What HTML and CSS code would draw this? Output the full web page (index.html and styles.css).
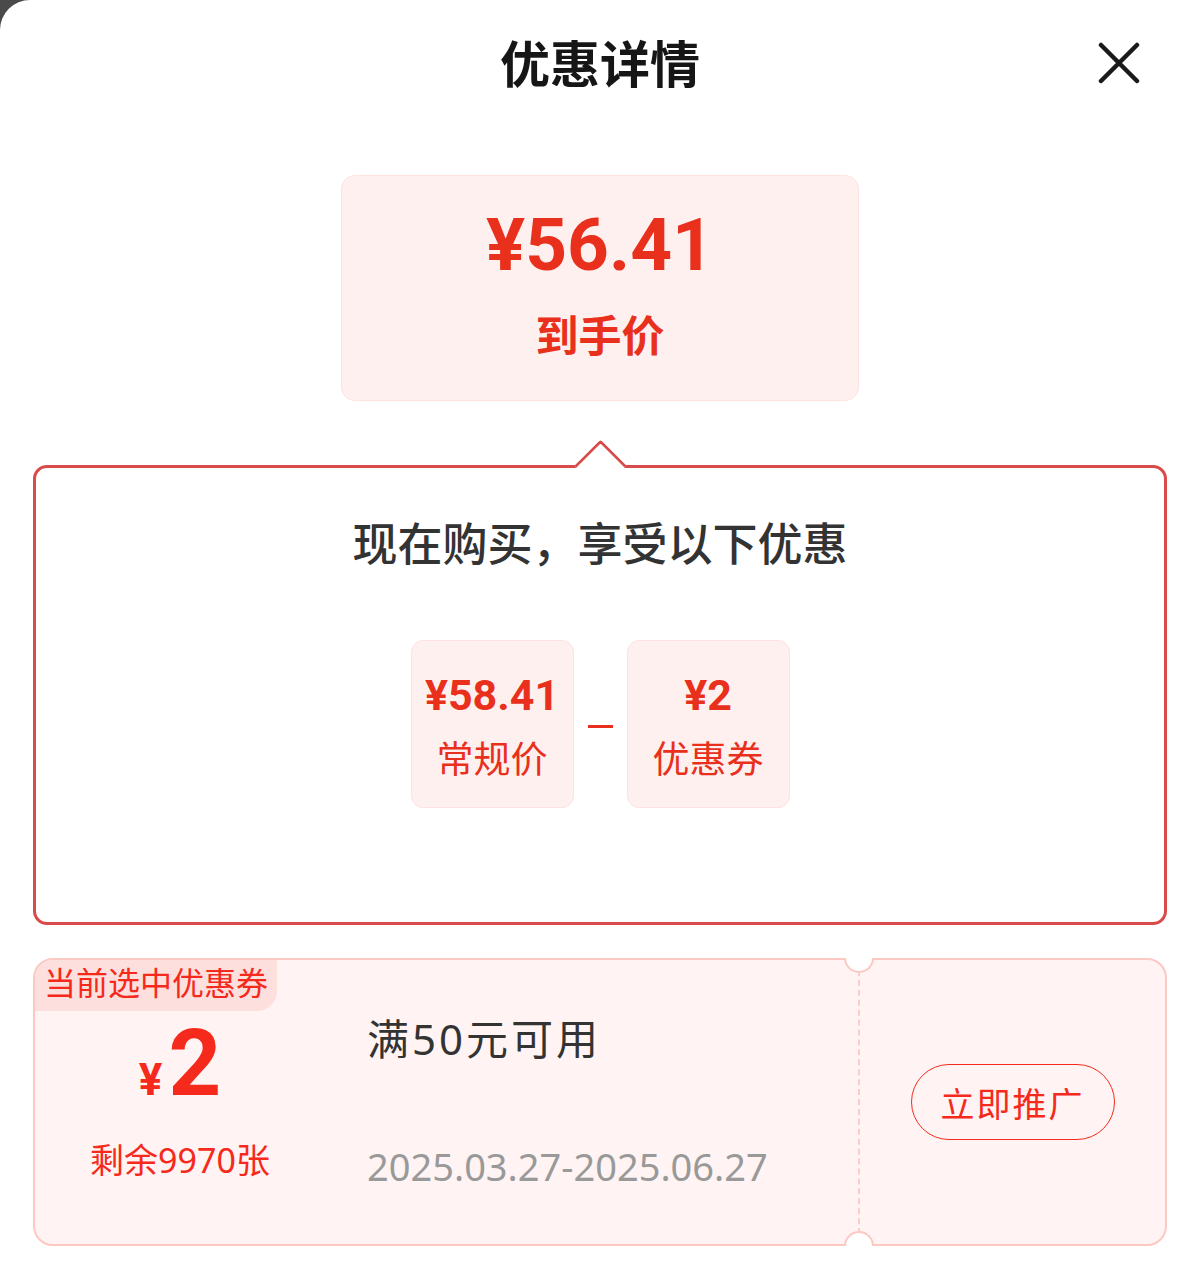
FILE: index.html
```html
<!DOCTYPE html>
<html lang="zh-CN">
<head>
  <meta charset="UTF-8">
  <title>优惠详情</title>
  <link rel="stylesheet" href="styles.css">
</head>
<body>

<div class="sheet">
  <div class="header">
    <h1>优惠详情</h1>
    <button class="close-btn" aria-label="关闭">
      <svg width="42" height="42" viewBox="0 0 42 42">
        <path d="M3 3 L39 39 M39 3 L3 39" stroke="#1a1a1a" stroke-width="4.5" stroke-linecap="round" fill="none"/>
      </svg>
    </button>
  </div>

  <div class="final-price">
    <div class="final-amount">¥56.41</div>
    <div class="final-label">到手价</div>
  </div>

  <div class="bubble">
    <div class="bubble-title">现在购买，享受以下优惠</div>
    <div class="calc">
      <div class="calc-item">
        <div class="calc-amount">¥58.41</div>
        <div class="calc-label">常规价</div>
      </div>
      <div class="minus"></div>
      <div class="calc-item">
        <div class="calc-amount">¥2</div>
        <div class="calc-label">优惠券</div>
      </div>
    </div>
  </div>

  <div class="coupon">
    <div class="coupon-tag">当前选中优惠券</div>
    <div class="coupon-value">
      <div class="coupon-amount"><span class="yen">¥</span>2</div>
      <div class="coupon-left">剩余9970张</div>
    </div>
    <div class="coupon-info">
      <div class="coupon-rule">满50元可用</div>
      <div class="coupon-date">2025.03.27-2025.06.27</div>
    </div>
    <div class="coupon-action">
      <button class="promote-btn">立即推广</button>
    </div>
  </div>
</div>

</body>
</html>
```

FILE: styles.css
```css
body {
  margin: 0;
  background: #4a4a4a;
  overflow: hidden;
  font-family: "Noto Sans", "Noto Sans CJK SC", sans-serif;
}

.sheet {
  width: 1200px;
  min-height: 1274px;
  background: #fff;
  border-radius: 30px 0 0 0;
}

.header {
  position: relative;
  height: 128px;
  display: flex;
  align-items: center;
  justify-content: center;
}

.header h1 {
  margin: 0;
  font-size: 50px;
  font-weight: 700;
  color: #161616;
  line-height: 60px;
}

.close-btn {
  position: absolute;
  right: 60px;
  top: 42px;
  width: 42px;
  height: 42px;
  padding: 0;
  border: none;
  background: none;
}

.close-btn svg {
  display: block;
}

/* 到手价 */
.final-price {
  width: 516px;
  margin: 47px auto 0;
  padding: 32px 0 39px;
  background: #fff0f0;
  border: 1px solid #fde2e0;
  border-radius: 14px;
  text-align: center;
  color: #e8301c;
}

.final-amount {
  font-family: Roboto, "Noto Sans CJK SC", sans-serif;
  font-size: 73px;
  font-weight: 700;
  line-height: 74px;
}

.final-label {
  margin-top: 29px;
  font-size: 43px;
  font-weight: 700;
  line-height: 50px;
}

/* 优惠说明 */
.bubble {
  position: relative;
  margin: 64px 33px 0;
  height: 454px;
  box-sizing: content-box;
  border: 3px solid #d94a4a;
  border-radius: 14px;
}

.bubble::before {
  content: "";
  position: absolute;
  left: 50%;
  top: -21px;
  width: 34px;
  height: 34px;
  margin-left: -18px;
  background: #fff;
  border-top: 3px solid #d94a4a;
  border-left: 3px solid #d94a4a;
  border-radius: 4px 0 0 0;
  transform: rotate(45deg);
}

.bubble-title {
  padding-top: 46px;
  text-align: center;
  font-size: 45px;
  font-weight: 500;
  line-height: 60px;
  color: #333;
}

.calc {
  display: flex;
  justify-content: center;
  align-items: center;
  margin-top: 66px;
}

.calc-item {
  width: 161px;
  height: 166px;
  box-sizing: content-box;
  background: #fff0f0;
  border: 1px solid #fde2e0;
  border-radius: 12px;
  text-align: center;
  color: #e8301c;
}

.calc-amount {
  margin-top: 29px;
  font-family: Roboto, "Noto Sans CJK SC", sans-serif;
  font-size: 43px;
  font-weight: 700;
  line-height: 50px;
}

.calc-label {
  margin-top: 16px;
  font-size: 37px;
  line-height: 46px;
}

.minus {
  width: 25px;
  height: 3px;
  margin: 4px 14px 0;
  background: #e8301c;
}

/* 优惠券 */
.coupon {
  position: relative;
  display: flex;
  margin: 33px 33px 0;
  height: 284px;
  background: #fff4f3;
  border: 2px solid #fcc8c2;
  border-radius: 20px;
}

.coupon-tag {
  position: absolute;
  left: 0;
  top: 0;
  padding: 0 9px;
  height: 51px;
  line-height: 46px;
  font-size: 32px;
  color: #f5291c;
  background: #fde0de;
  border-radius: 18px 0 20px 0;
}

.coupon-value {
  width: 290px;
  text-align: center;
  color: #f5291c;
}

.coupon-amount {
  margin-top: 54px;
  font-family: Roboto, "Noto Sans CJK SC", sans-serif;
  font-size: 92px;
  font-weight: 700;
  line-height: 100px;
}

.coupon-amount .yen {
  font-size: 44px;
  margin-right: 6px;
}

.coupon-left {
  margin-top: 8px;
  font-size: 34px;
  line-height: 44px;
}

.coupon-info {
  flex: 1;
  padding-left: 42px;
  border-right: 2px dashed #f9cdc8;
}

.coupon-rule {
  margin-top: 51px;
  font-size: 42px;
  letter-spacing: 3px;
  line-height: 56px;
  color: #333;
}

.coupon-date {
  margin-top: 74px;
  font-size: 38px;
  line-height: 50px;
  color: #999;
}

.coupon-action {
  width: 305px;
  display: flex;
  align-items: center;
  justify-content: center;
  position: relative;
}

.coupon-action::before,
.coupon-action::after {
  content: "";
  position: absolute;
  left: -16px;
  width: 26px;
  height: 13px;
  background: #fff;
  border: 2px solid #fcc8c2;
}

.coupon-action::before {
  top: -2px;
  border-top: none;
  border-radius: 0 0 15px 15px;
}

.coupon-action::after {
  bottom: -2px;
  border-bottom: none;
  border-radius: 15px 15px 0 0;
}

.promote-btn {
  width: 204px;
  height: 76px;
  padding: 0;
  font-family: "Noto Sans CJK SC", sans-serif;
  font-size: 34px;
  letter-spacing: 2px;
  color: #f5291c;
  background: transparent;
  border: 1.5px solid #f5291c;
  border-radius: 38px;
}
```
